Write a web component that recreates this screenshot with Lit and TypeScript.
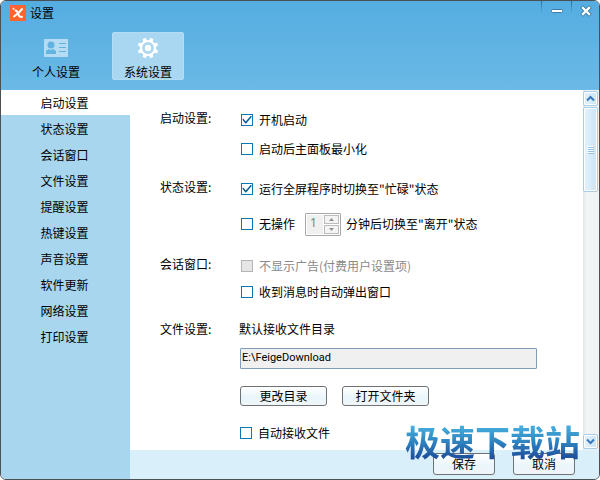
import { LitElement, html, css, svg } from "lit";
import { customElement, state } from "lit/decorators.js";
import { classMap } from "lit/directives/class-map.js";

const NAV = ["启动设置", "状态设置", "会话窗口", "文件设置", "提醒设置", "热键设置", "声音设置", "软件更新", "网络设置", "打印设置"];

const TEETH = [0, 45, 90, 135, 180, 225, 270, 315];

@customElement("app-root")
export class AppRoot extends LitElement {
  @state() private section = 0;
  @state() private tab = 1;

  static styles = css`
    :host {
      display: block;
      font: 12px/20px "Noto Sans CJK SC", "Noto Sans", sans-serif;
      color: #000;
      background: #fff;
    }
    * { box-sizing: border-box; }
    button, input { font: inherit; color: inherit; margin: 0; padding: 0; }
    svg { display: block; }
    .window {
      position: relative;
      display: flex;
      flex-direction: column;
      min-height: 100vh;
      border: 1px solid #4b5054;
      border-radius: 6px;
      overflow: hidden;
    }
    header {
      height: 89px;
      background: linear-gradient(#54ade0, #6bb9e6);
    }
    .titlebar { display: flex; height: 31px; }
    .title {
      flex: 1;
      display: flex;
      align-items: center;
      gap: 4px;
      height: 24px;
      padding-left: 9px;
      margin: 0;
      font-size: 12px;
      font-weight: 400;
    }
    .win {
      width: 30px;
      height: 20px;
      padding-left: 2px;
      border: 0;
      background: none;
      display: flex;
      align-items: center;
      justify-content: center;
      position: relative;
    }
    .close { width: 28px; }
    .win::before {
      content: "";
      position: absolute;
      left: 0;
      top: 0;
      width: 1px;
      height: 12px;
      background: linear-gradient(#2f6c96, #54ade0);
    }
    .tabs { display: flex; gap: 20px; padding-left: 19px; }
    .tab {
      width: 72px;
      height: 48px;
      border: 1px solid transparent;
      border-radius: 2px;
      background: none;
      display: flex;
      flex-direction: column;
      align-items: center;
      padding-top: 4px;
      gap: 3px;
    }
    .tab svg { flex: none; }
    .tab.on { background: #a9d6f0; border-color: #b4dcf3; }
    .body { flex: 1; display: flex; }
    nav { width: 129px; background: #a7d6ee; }
    nav button {
      display: block;
      width: 100%;
      height: 26px;
      padding-right: 2px;
      border: 0;
      border-bottom: 1px solid #a7d6ee;
      background: none;
      text-align: center;
    }
    nav button.on { background: #fff; }
    .right { flex: 1; display: flex; flex-direction: column; min-width: 0; }
    .view { flex: 1; display: flex; }
    .content { flex: 1; padding: 18px 45px 0 30px; min-width: 0; }
    .group {
      display: grid;
      grid-template-columns: 81px 1fr;
      margin: 0 0 16px;
    }
    .rows { display: flex; flex-direction: column; gap: 5px; }
    .loose { gap: 11px; }
    .tight { gap: 2px; }
    .tail { margin-bottom: 15px; }
    .wide { margin-bottom: 18px; }
    .row, .check { display: flex; align-items: center; height: 24px; }
    .check { gap: 6px; white-space: nowrap; }
    .check.off { color: #8a8a8a; }
    .row { gap: 10px; }
    .after { margin-left: -5px; white-space: nowrap; }
    input[type="checkbox"] {
      appearance: none;
      flex: none;
      width: 12px;
      height: 12px;
      border: 1px solid #0a76b4;
      background: #fff;
      display: grid;
      place-items: center;
    }
    input[type="checkbox"]:checked::before {
      content: "";
      width: 10px;
      height: 10px;
      background: #0a5c94;
      clip-path: polygon(6% 38%, 14% 38%, 38% 66%, 86% 10%, 96% 10%, 96% 20%, 42% 86%, 34% 86%, 6% 50%);
    }
    input[type="checkbox"]:disabled { border-color: #b4b4b4; background: #e6e6e6; }
    .spin {
      display: flex;
      width: 36px;
      height: 23px;
      border: 1px solid #a8a8a8;
      border-radius: 1px;
      padding: 1px;
      gap: 1px;
      background: #fff;
    }
    .spin input {
      width: 16px;
      border: 0;
      padding: 0 0 2px 3px;
      background: #f0f0f0;
      color: #808080;
      font-family: "Noto Sans", sans-serif;
    }
    .arrows { display: flex; flex-direction: column; gap: 1px; flex: 1; }
    .arrows button {
      flex: 1;
      border: 1px solid #bcbcbc;
      background: #f4f4f4;
      display: grid;
      place-items: center;
    }
    .files { grid-template-columns: 79px 1fr; margin: 0; }
    .files .rows { gap: 0; }
    .indent { margin-left: 1px; }
    .path {
      display: block;
      width: 100%;
      max-width: 297px;
      height: 21px;
      margin-top: 9px;
      border: 1px solid #7f9db9;
      border-radius: 1px;
      background: #f0f0f0;
      padding: 0 1px 2px;
      font-family: Roboto, sans-serif;
      font-size: 11px;
    }
    .buttons { display: flex; gap: 15px; margin-top: 17px; margin-bottom: 15px; }
    .btn {
      width: 87px;
      height: 20px;
      line-height: 18px;
      border: 1px solid #6f7275;
      border-radius: 3px;
      background: linear-gradient(#ffffff, #e9f5fb 60%, #f0f6f9);
    }
    .scroll {
      width: 16px;
      display: flex;
      flex-direction: column;
      background: linear-gradient(90deg, #dfe6e8, #f1f5f5 20%, #eef2f2);
      padding: 1px 1px 1px 0;
      gap: 1px;
    }
    .scroll button {
      height: 15px;
      border: 1px solid #a5cde8;
      border-radius: 2px;
      background: linear-gradient(90deg, #e3f2fb, #cbe4f5);
      box-shadow: inset 0 0 0 1px #fff;
      display: grid;
      place-items: center;
    }
    .scroll .thumb { height: 85px; }
    .scroll .down { margin-top: auto; }
    footer {
      height: 29px;
      display: flex;
      justify-content: flex-end;
      gap: 18px;
      padding: 3px 24px 0 0;
      background: #d9f0fb;
    }
    footer .btn { width: 62px; height: 22px; }
    .mark {
      position: absolute;
      right: 19px;
      bottom: 17px;
      font-size: 35px;
      line-height: 42px;
      font-weight: 700;
      white-space: nowrap;
      color: transparent;
      background: linear-gradient(#49b4e0 10%, #2f86c2 50%, #1f4f9c 90%);
      background-clip: text;
      -webkit-background-clip: text;
      pointer-events: none;
    }
  `;

  private check(text: string, on = false, disabled = false) {
    return html`<label class=${classMap({ check: true, off: disabled })}
      ><input type="checkbox" .checked=${on} ?disabled=${disabled} /><span>${text}</span></label
    >`;
  }

  private chevron(d: string) {
    return html`<svg width="9" height="7" viewBox="0 0 9 7" fill="none" stroke="#3a78c0" stroke-width="2"><path d=${d} /></svg>`;
  }

  private triangle(d: string) {
    return html`<svg width="5" height="3" viewBox="0 0 5 3" fill="#909090"><path d=${d} /></svg>`;
  }

  render() {
    return html`
      <div class="window">
        <header>
          <div class="titlebar">
            <h1 class="title">
              <svg width="16" height="16" viewBox="0 0 16 16">
                <rect width="16" height="16" fill="#ff642c" />
                <path d="M5.500 5.500C7 5.500 7.500 7 8.200 9C8.800 11 10 12.300 12 11.800M12 4L9 7.500L4 11.500" fill="none" stroke="#fff" stroke-width="2" stroke-linecap="round" />
                <circle cx="3.500" cy="3.800" r="1" fill="#fff" />
              </svg>
              设置
            </h1>
            <button class="win" aria-label="最小化">
              <svg width="12" height="4" viewBox="0 0 12 4"><rect x=".5" y=".5" width="11" height="3" rx="1" fill="#fff" stroke="#397ba6" /></svg>
            </button>
            <button class="win close" aria-label="关闭">
              <svg width="12" height="12" viewBox="0 0 12 12" fill="none" stroke-linecap="square">
                <path d="M3 3L9 9M9 3L3 9" stroke="#397ba6" stroke-width="4" />
                <path d="M3 3L9 9M9 3L3 9" stroke="#fff" stroke-width="2.400" />
              </svg>
            </button>
          </div>
          <div class="tabs">
            <button class="tab ${classMap({ on: this.tab === 0 })}" @click=${() => (this.tab = 0)}>
              <svg width="24" height="22" viewBox="0 0 24 22">
                <rect y="2" width="24" height="18" rx="1" fill="#b5dcf2" />
                <circle cx="7" cy="8" r="3.500" fill="#62b3e2" />
                <path d="M2 17V15C2 13 4 12.500 5.500 12L7 13.500L8.500 12C10 12.500 12 13 12 15V17Z" fill="#62b3e2" />
                <path d="M15 6.500H22M15 10.500H22M15 14.500H22" stroke="#62b3e2" />
              </svg>
              <span>个人设置</span>
            </button>
            <button class="tab ${classMap({ on: this.tab === 1 })}" @click=${() => (this.tab = 1)}>
              <svg width="22" height="22" viewBox="0 0 22 22">
                ${TEETH.map((a) => svg`<path d="M8.800 4L9.600 .6H12.400L13.200 4Z" fill="#fff" transform="rotate(${a + 22.5} 11 11)" />`)}
                <circle cx="11" cy="11" r="7" fill="none" stroke="#fff" stroke-width="2.200" />
                <circle cx="11" cy="11" r="3.200" fill="#fff" />
              </svg>
              <span>系统设置</span>
            </button>
          </div>
        </header>
        <div class="body">
          <nav>
            ${NAV.map(
              (n, i) => html`<button class=${classMap({ on: i === this.section })} @click=${() => (this.section = i)}>${n}</button>`
            )}
          </nav>
          <div class="right">
            <div class="view">
              <main class="content">
                <div class="group" role="group" aria-labelledby="g1">
                  <span id="g1">启动设置:</span>
                  <div class="rows">${this.check("开机启动", true)}${this.check("启动后主面板最小化")}</div>
                </div>
                <div class="group wide" role="group" aria-labelledby="g2">
                  <span id="g2">状态设置:</span>
                  <div class="rows loose">
                    ${this.check('运行全屏程序时切换至"忙碌"状态', true)}
                    <div class="row">
                      ${this.check("无操作")}
                      <div class="spin">
                        <input id="minutes" type="text" inputmode="numeric" value="1" disabled />
                        <div class="arrows">
                          <button disabled aria-label="增加">${this.triangle("M0 3L2.5 0L5 3Z")}</button>
                          <button disabled aria-label="减少">${this.triangle("M0 0L2.5 3L5 0Z")}</button>
                        </div>
                      </div>
                      <label class="after" for="minutes">分钟后切换至"离开"状态</label>
                    </div>
                  </div>
                </div>
                <div class="group tail" role="group" aria-labelledby="g3">
                  <span id="g3">会话窗口:</span>
                  <div class="rows tight">
                    ${this.check("不显示广告(付费用户设置项)", false, true)}${this.check("收到消息时自动弹出窗口")}
                  </div>
                </div>
                <div class="group files" role="group" aria-labelledby="g4">
                  <span id="g4">文件设置:</span>
                  <div class="rows">
                    <label for="path">默认接收文件目录</label>
                    <div class="indent">
                      <input id="path" class="path" type="text" readonly .value=${"E:\\FeigeDownload"} />
                      <div class="buttons">
                        <button class="btn">更改目录</button>
                        <button class="btn">打开文件夹</button>
                      </div>
                      ${this.check("自动接收文件")}
                    </div>
                  </div>
                </div>
              </main>
              <div class="scroll">
                <button aria-label="向上">${this.chevron("M1 5.500L4.500 2L8 5.500")}</button>
                <button class="thumb" aria-label="滚动">
                  <svg width="7" height="8" viewBox="0 0 7 8">
                    <path d="M0 .5H6M0 2.500H6M0 4.500H6M0 6.500H6" stroke="#fff" />
                    <path d="M1 1.500H7M1 3.500H7M1 5.500H7M1 7.500H7" stroke="#8fc3e6" />
                  </svg>
                </button>
                <button class="down" aria-label="向下">${this.chevron("M1 1.500L4.500 5L8 1.500")}</button>
              </div>
            </div>
            <footer>
              <button class="btn">保存</button>
              <button class="btn">取消</button>
            </footer>
          </div>
        </div>
        <div class="mark">极速下载站</div>
      </div>
    `;
  }
}
